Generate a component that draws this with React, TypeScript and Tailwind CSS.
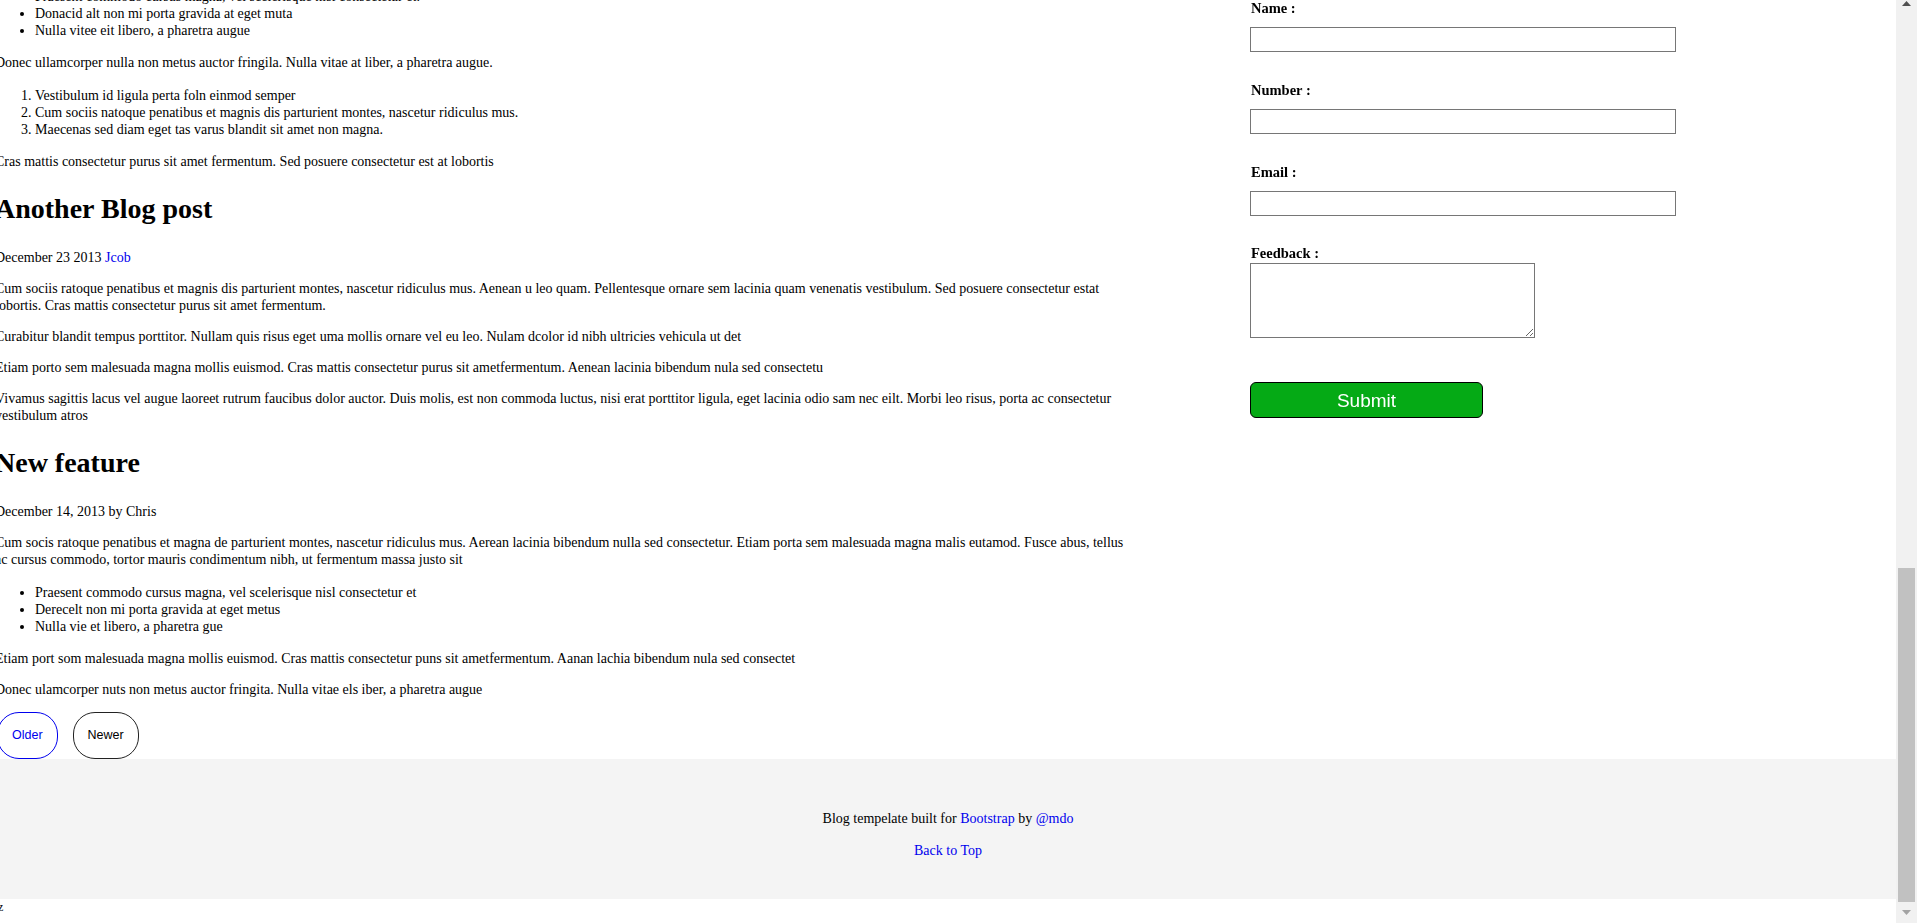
import React from "react";

const link = "text-[#0000ee]";

function P({ children }: { children: React.ReactNode }) {
  return <p className="my-[14px]">{children}</p>;
}

function H2({ children }: { children: React.ReactNode }) {
  return <h2 className="my-[24px] text-[28px] font-bold leading-[30.8px]">{children}</h2>;
}

function UL({ items }: { items: string[] }) {
  return (
    <ul className="my-[15.5px] list-disc pl-[40px]">
      {items.map((t) => (
        <li key={t}>{t}</li>
      ))}
    </ul>
  );
}

function OL({ items }: { items: string[] }) {
  return (
    <ol className="my-[15.5px] list-decimal pl-[40px]">
      {items.map((t) => (
        <li key={t}>{t}</li>
      ))}
    </ol>
  );
}

function Field({ label, first }: { label: string; first?: boolean }) {
  return (
    <div className={first ? "" : "mt-[30px]"}>
      <label className="block pl-[1px] text-[14.5px] font-bold leading-[17px]">{label}</label>
      <input type="text" className="mt-[10px] block h-[25px] w-[426px] border border-[#767676] bg-white px-[2px] text-[13px] outline-none" />
    </div>
  );
}

function Sidebar() {
  return (
    <aside className="sticky top-0 ml-[120px] w-[426px] shrink-0 self-start">
      <form onSubmit={(e) => e.preventDefault()}>
        <Field label="Name :" first />
        <Field label="Number :" />
        <Field label="Email :" />
        <label className="mt-[29px] block pl-[1px] text-[14.5px] font-bold leading-[17px]">Feedback :</label>
        <textarea className="mt-[1px] block h-[75px] w-[285px] border border-[#767676] bg-white text-[13px] outline-none" />
        <button
          type="submit"
          className="mt-[44px] block h-[36px] w-[233px] rounded-[6px] border border-black bg-[#05aa15] font-['Liberation_Sans',Arial,sans-serif] text-[19px] text-white"
        >
          Submit
        </button>
      </form>
    </aside>
  );
}

function FirstPost() {
  return (
    <div>
      <h2 className="mt-0 mb-[24px] text-[28px] font-bold leading-[30.8px]">Sample blog post</h2>
      <P>
        January 1, 2014 by <a className={link}>Mark</a>
      </P>
      <P>
        This blog post shows a few different types of content that's supported and styled with Bootstrap. Basic
        typography, images, and code are all supported.
      </P>
      <hr className="my-[20px] border-[#ddd]" />
      <P>
        Cum sociis natoque penatibus et magnis dis parturient montes, nascetur ridiculus mus. Aenean eu leo quam.
        Pellentesque ornare sem lacinia quam venenatis vestibulum. Sed posuere consectetur est at lobortis. Cras mattis
        consectetur purus sit amet fermentum.
      </P>
      <blockquote className="my-[14px] ml-[40px]">
        Curabitur blandit tempus porttitor. Nullam quis risus eget urna mollis ornare vel eu leo. Nullam id dolor id
        nibh ultricies vehicula ut id elit.
      </blockquote>
      <P>
        Etiam porta sem malesuada magna mollis euismod. Cras mattis consectetur purus sit amet fermentum. Aenean
        lacinia bibendum nulla sed consectetur.
      </P>
      <H2>Heading</H2>
      <P>
        Vivamus sagittis lacus vel augue laoreet rutrum faucibus dolor auctor. Duis mollis, est non commodo luctus,
        nisi erat porttitor ligula, eget lacinia odio sem nec elit. Morbi leo risus, porta ac consectetur ac,
        vestibulum at eros.
      </P>
      <h3 className="mt-[22px] mb-[18px] text-[20px] font-bold">Sub-heading</h3>
      <P>Cum sociis natoque penatibus et magnis dis parturient montes, nascetur ridiculus mus.</P>
      <pre className="my-[14px] font-['Liberation_Mono',monospace]">Example code block</pre>
      <P>
        Aenean lacinia bibendum nulla sed consectetur. Etiam porta sem malesuada magna mollis euismod. Fusce dapibus,
        tellus ac cursus commodo, tortor mauris condimentum nibh, ut fermentum massa.
      </P>
      <h3 className="mt-[22px] mb-[18px] text-[20px] font-bold">Sub-heading</h3>
      <P>
        Cum sociis natoque penatibus et magnis dis parturient montes, nascetur ridiculus mus. Aenean lacinia bibendum
        nulla sed consectetur. Etiam porta sem malesuada magna mollis euismod.
      </P>
      <UL
        items={[
          "Praesent commodo cursus magna, vel scelerisque nisl consectetur et.",
          "Donacid alt non mi porta gravida at eget muta",
          "Nulla vitee eit libero, a pharetra augue",
        ]}
      />
      <P>Donec ullamcorper nulla non metus auctor fringila. Nulla vitae at liber, a pharetra augue.</P>
      <OL
        items={[
          "Vestibulum id ligula perta foln einmod semper",
          "Cum sociis natoque penatibus et magnis dis parturient montes, nascetur ridiculus mus.",
          "Maecenas sed diam eget tas varus blandit sit amet non magna.",
        ]}
      />
      <P>Cras mattis consectetur purus sit amet fermentum. Sed posuere consectetur est at lobortis</P>
    </div>
  );
}

function Posts() {
  return (
    <div>
      <H2>Another Blog post</H2>
      <P>
        December 23 2013 <a className={link}>Jcob</a>
      </P>
      <P>
        Cum sociis ratoque penatibus et magnis dis parturient montes, nascetur ridiculus mus. Aenean u leo quam.
        Pellentesque ornare sem lacinia quam venenatis vestibulum. Sed posuere consectetur estat lobortis. Cras mattis
        consectetur purus sit amet fermentum.
      </P>
      <P>
        Curabitur blandit tempus porttitor. Nullam quis risus eget uma mollis ornare vel eu leo. Nulam dcolor id nibh
        ultricies vehicula ut det
      </P>
      <P>
        Etiam porto sem malesuada magna mollis euismod. Cras mattis consectetur purus sit ametfermentum. Aenean lacinia
        bibendum nula sed consectetu
      </P>
      <P>
        Vivamus sagittis lacus vel augue laoreet rutrum faucibus dolor auctor. Duis molis, est non commoda luctus, nisi
        erat porttitor ligula, eget lacinia odio sam nec eilt. Morbi leo risus, porta ac consectetur vestibulum atros
      </P>

      <H2>New feature</H2>
      <P>December 14, 2013 by Chris</P>
      <P>
        Cum socis ratoque penatibus et magna de parturient montes, nascetur ridiculus mus. Aerean lacinia bibendum
        nulla sed consectetur. Etiam porta sem malesuada magna malis eutamod. Fusce abus, tellus ac cursus commodo,
        tortor mauris condimentum nibh, ut fermentum massa justo sit
      </P>
      <UL
        items={[
          "Praesent commodo cursus magna, vel scelerisque nisl consectetur et",
          "Derecelt non mi porta gravida at eget metus",
          "Nulla vie et libero, a pharetra gue",
        ]}
      />
      <P>
        Etiam port som malesuada magna mollis euismod. Cras mattis consectetur puns sit ametfermentum. Aanan lachia
        bibendum nula sed consectet
      </P>
      <P>Donec ulamcorper nuts non metus auctor fringita. Nulla vitae els iber, a pharetra augue</P>

      <nav className="mt-[14px] ml-[2px] flex gap-[15px] font-['Liberation_Sans',Arial,sans-serif] text-[12.5px] leading-[15px]">
        <button className="rounded-[22px] border border-[#0000ee] px-[14px] py-[15px] text-[#0000ee]">Older</button>
        <button className="rounded-[22px] border border-[#222] px-[14px] py-[15px] text-black">Newer</button>
      </nav>
    </div>
  );
}

function Scrollbar() {
  return (
    <div className="flex w-[21px] shrink-0 flex-col bg-[#f1f1f1]">
      <div className="flex h-[21px] justify-center pt-[1px]">
        <svg width="9" height="5" viewBox="0 0 9 5">
          <path d="M4.5 0L9 5H0z" fill="#505050" />
        </svg>
      </div>
      <div className="flex flex-1 flex-col justify-end px-[2px]">
        <div className="h-[334px] bg-[#c1c1c1]" />
      </div>
      <div className="flex h-[21px] justify-center pt-[8px]">
        <svg width="9" height="5" viewBox="0 0 9 5">
          <path d="M0 0H9L4.5 5z" fill="#a3a3a3" />
        </svg>
      </div>
    </div>
  );
}

export default function App() {
  return (
    <div className="flex h-screen bg-white">
      <div className="flex min-w-0 flex-1 flex-col-reverse overflow-y-scroll text-[14px] leading-[17px] text-black font-['Liberation_Serif','Times_New_Roman',serif] [scrollbar-width:none]">
        <div className="shrink-0">
          <header className="px-[10px] pt-[60px] pb-[60px]">
            <h1 className="text-[36px] font-bold leading-[40px]">The Bootstrap Blog</h1>
            <p className="mt-[10px] text-[16px]">The official example template of creating a blog with Bootstrap.</p>
          </header>

          <div className="flex items-start">
            <main className="-ml-[5px] w-[1135px] shrink-0">
              <FirstPost />
              <Posts />
            </main>
            <Sidebar />
          </div>

          <footer className="h-[140px] bg-[#f4f4f4] pt-[50px] text-center text-[14px] leading-[20px]">
            <p>
              Blog tempelate built for <a className={link}>Bootstrap</a> by <a className={link}>@mdo</a>
            </p>
            <p className="mt-[12px]">
              <a className={link}>Back to Top</a>
            </p>
          </footer>
          <div className="-ml-[2px] pb-[7px] text-[12px]">z</div>
        </div>
      </div>
      <Scrollbar />
    </div>
  );
}
